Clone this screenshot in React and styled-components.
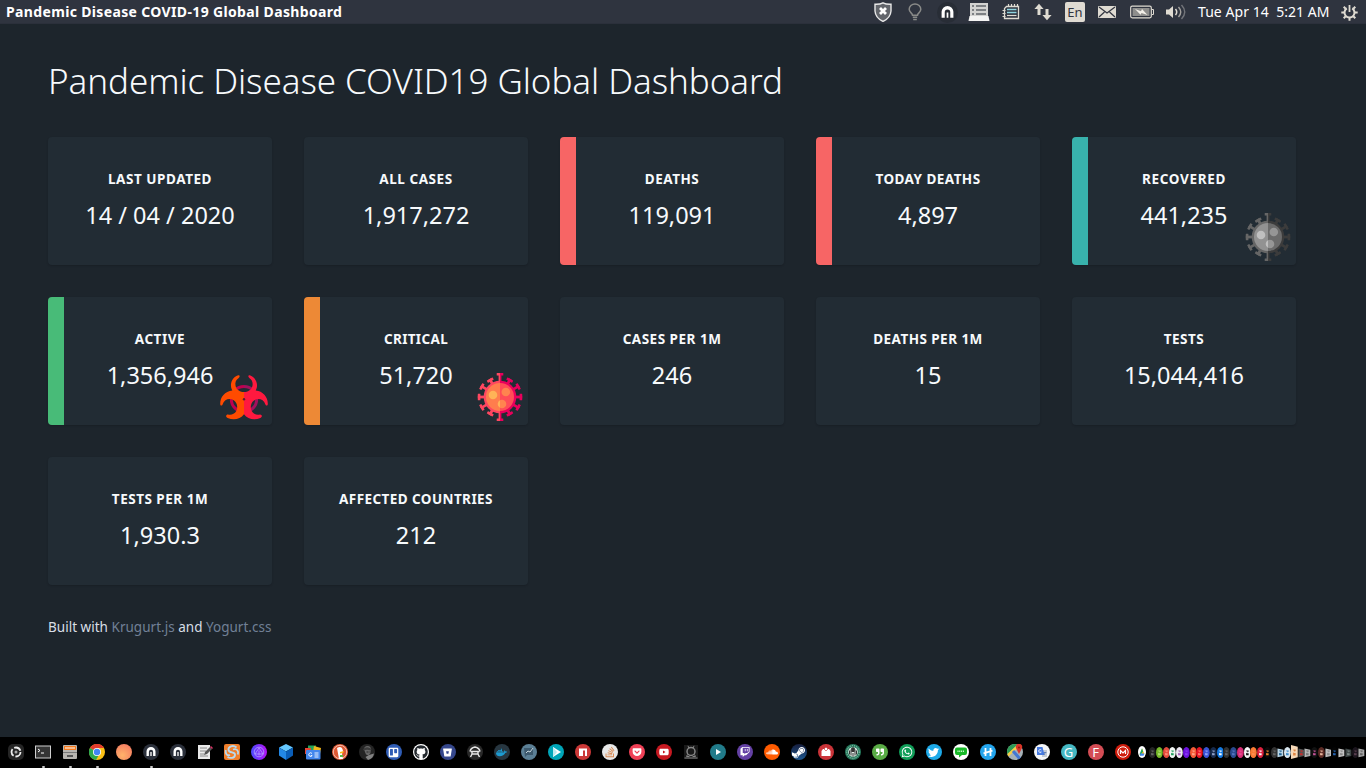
import React from "react";
import styled, { createGlobalStyle } from "styled-components";
import {
  FaTrello, FaGithub, FaBitbucket, FaDocker, FaStackOverflow, FaGetPocket, FaYoutube,
  FaTwitch, FaSoundcloud, FaSteamSymbol, FaQuoteRight, FaWhatsapp, FaTwitter, FaHips,
} from "react-icons/fa";

const GlobalStyle = createGlobalStyle`
  * { box-sizing: border-box; }
  body {
    margin: 0;
    background: #1d252c;
    color: #f7fafc;
    font-family: "Noto Sans", "Open Sans", sans-serif;
    overflow: hidden;
  }
`;

const Desktop = styled.div`
  width: 1366px;
  height: 768px;
  display: flex;
  flex-direction: column;
`;

const MenuBar = styled.header`
  height: 24px;
  flex: none;
  display: flex;
  align-items: center;
  justify-content: space-between;
  padding: 0 8px 0 6px;
  background: linear-gradient(#2f343f 0 23px, #2b303b 23px);
  white-space: nowrap;
`;

const WindowTitle = styled.div`
  font-size: 14px;
  line-height: 24px;
  font-weight: 700;
  letter-spacing: 0.35px;
  color: #fff;
`;

const Tray = styled.div`
  display: flex;
  align-items: center;
  height: 24px;
`;

const TraySlot = styled.div`
  width: ${(p) => p.$w}px;
  height: 24px;
  display: flex;
  align-items: center;
  justify-content: center;
`;

const Keyboard = styled.div`
  width: 20px;
  height: 20px;
  border-radius: 2px;
  background: #dfdbd2;
  color: #30343f;
  font-size: 13px;
  line-height: 21px;
  text-align: center;
`;

const Clock = styled.div`
  width: 132px;
  margin: 0 11px 0 7px;
  font-size: 14px;
  line-height: 24px;
  letter-spacing: 0.05px;
  color: #fff;
  white-space: pre;
`;

const Page = styled.main`
  flex: 1;
  padding: 33px 48px 0;
`;

const Heading = styled.h1`
  margin: 0 0 32px;
  height: 48px;
  font-size: 35px;
  line-height: 48px;
  font-weight: 300;
  letter-spacing: -0.06px;
  white-space: nowrap;
`;

const Grid = styled.section`
  display: grid;
  grid-template-columns: repeat(5, 224px);
  grid-auto-rows: 128px;
  gap: 32px;
`;

const Card = styled.article`
  position: relative;
  display: flex;
  flex-direction: column;
  align-items: center;
  padding-top: 32px;
  border-radius: 4px;
  background: ${(p) =>
    p.$accent ? `linear-gradient(90deg, ${p.$accent} 16px, #222c34 16px)` : "#222c34"};
  box-shadow: 0 1px 2px rgba(0, 0, 0, 0.16);
`;

const Label = styled.div`
  font-size: 13.5px;
  line-height: 20px;
  font-weight: 700;
  letter-spacing: ${(p) => p.$track}px;
  white-space: nowrap;
`;

const Value = styled.div`
  margin-top: 8px;
  font-size: 23.5px;
  line-height: 36px;
  white-space: nowrap;
`;

const Badge = styled.div`
  position: absolute;
  right: 4px;
  bottom: 4px;
  width: 48px;
  height: 48px;
`;

const Credits = styled.p`
  margin: 32px 0 0;
  font-size: 13.5px;
  line-height: 20px;
  letter-spacing: 0.02px;
  color: #d8dee6;
`;

const Link = styled.span`
  color: #718096;
`;

const Dock = styled.footer`
  height: 31px;
  flex: none;
  display: flex;
  align-items: center;
  padding: 0 0 1px 2px;
  background: #000;
  overflow: hidden;
`;

const DockSlot = styled.div`
  position: relative;
  width: 27px;
  flex: none;
  display: flex;
  justify-content: center;
  ${(p) => p.$running && `
    &::after {
      content: "";
      position: absolute;
      left: 12.5px;
      bottom: -8px;
      width: 3px;
      height: 2px;
      border-radius: 1px;
      background: #c8c8c8;
    }
  `}
  ${(p) => p.$active && `
    &::before {
      content: "";
      position: absolute;
      left: 12.5px;
      top: -8px;
      width: 3px;
      height: 1px;
      background: #9a9a9a;
    }
  `}
`;

const Disc = styled.div`
  width: 16px;
  height: 16px;
  border-radius: 50%;
  display: flex;
  align-items: center;
  justify-content: center;
  background: ${(p) => p.$bg};
  color: ${(p) => p.$fg || "#fff"};
  font-size: ${(p) => p.$size || 9}px;
  line-height: 16px;
  overflow: hidden;
`;

const Overflow = styled.div`
  display: flex;
  align-items: center;
  padding-left: 2px;
`;

const Sliver = styled.svg`
  display: block;
  flex: none;
  width: ${(p) => (p.$wide ? 8 : 6.75)}px;
  height: ${(p) => p.$h || 11}px;
  margin-right: ${(p) => (p.$wide ? 3 : 0)}px;
`;

const virusWarm = { shellL: "#ff4760", shellR: "#e8005c", coreL: "#ff7d4d", coreR: "#ff4d57", spotL: "#ffb357", spotR: "#ff844f" };
const virusGrey = { shellL: "#666", shellR: "#3c3c3c", coreL: "#929292", coreR: "#6b6b6b", spotL: "#c0c0c0", spotR: "#969696" };
const reach = [24, 20.8, 22.2, 22.2, 22.2, 20.8, 24, 20.8, 22.2, 22.2, 22.2, 20.8];

function Virus({ id, palette: c }) {
  const body = (shell, core) => (
    <>
      {reach.map((r, i) => (
        <g key={i} transform={`rotate(${i * 30} 24 24)`} fill={shell}>
          <rect x="22.6" y={24 - r} width="2.8" height="11" />
          <rect x="20.7" y={24 - r} width="6.6" height="2.6" rx=".3" />
        </g>
      ))}
      <circle cx="24" cy="24" r="16.3" fill={shell} />
      <circle cx="24" cy="24" r="14" fill={core} />
    </>
  );
  return (
    <svg width="48" height="48" viewBox="0 0 48 48">
      <clipPath id={`${id}-l`}><rect width="24" height="48" /></clipPath>
      <clipPath id={`${id}-r`}><rect x="24" width="24" height="48" /></clipPath>
      <g clipPath={`url(#${id}-l)`}>{body(c.shellL, c.coreL)}</g>
      <g clipPath={`url(#${id}-r)`}>{body(c.shellR, c.coreR)}</g>
      <circle cx="17" cy="22" r="4.3" fill={c.spotL} />
      <circle cx="29.8" cy="19" r="4.3" fill={c.spotR} />
      <circle cx="26" cy="31" r="4.3" fill={c.spotR} />
      <path d="M24 27.2a4.3 4.3 0 0 0 0 7.6Z" fill={c.spotL} />
    </svg>
  );
}

const horn =
  "M18.2 2.3C13 4 10.6 9 11 13.2C11.1 15 11.7 16.2 12.3 17.6C5 18.2 0 24.2.2 31C.3 33 2.2 33 2.7 31.3C4.2 26 10.2 24.8 14 27.4C17.4 29.8 18 34.5 16.3 38C14.4 41.4 11 42.2 8 41.5C5.6 41.5 5.6 44.2 7.6 45C13.2 47.5 20.3 46.6 24 41.3V19C20.3 19 16.6 17 15.6 13C14.8 9.3 16 7 18.7 5C20.3 3.4 19.8 1.9 18.2 2.3Z";

function Biohazard() {
  return (
    <svg width="48" height="48" viewBox="0 0 48 48">
      <path d="M24 13.5a12.7 12.7 0 0 0 0 25.4" fill="none" stroke="#c1004f" strokeWidth="3" />
      <path d="M24 13.5a12.7 12.7 0 0 1 0 25.4" fill="none" stroke="#a3105d" strokeWidth="3" />
      <path d={horn} fill="#ff4b00" />
      <path d={horn} fill="#ff193f" transform="matrix(-1 0 0 1 48 0)" />
      <circle cx="24" cy="26.3" r="1.2" fill="#5c1d2c" />
    </svg>
  );
}

const Arch = ({ size = 16, bg = "#2b303b" }) => (
  <svg width={size} height={size} viewBox="0 0 16 16">
    <circle cx="8" cy="8" r="8" fill={bg} />
    <path d="M3.5 12V7.5a4.5 4.5 0 0 1 9 0V12h-2.4V7.8a2.1 2.1 0 0 0-4.2 0V12Z" fill="#fff" />
    <path d="M8 8v4" stroke="#fff" strokeWidth="1.3" />
  </svg>
);

const TrayIcons = () => (
  <>
    <TraySlot $w={32}>
      <svg width="18" height="20" viewBox="0 0 18 20">
        <path d="M1 2.2Q6 2.4 9 .8Q12 2.4 17 2.2V9Q16.5 16 9 19.4Q1.500 16 1 9Z" fill="#62656b" stroke="#e8e8e8" strokeWidth="1.4" />
        <path d="m6 6 6 6m0-6-6 6" stroke="#fff" strokeWidth="2.8" />
      </svg>
    </TraySlot>
    <TraySlot $w={32}>
      <svg width="14" height="18" viewBox="0 0 14 18" fill="none" stroke="#898a88" strokeWidth="1.5">
        <path d="M4.500 12.200C4.500 10 1.200 9.500 1.200 6.300a5.800 5.300 0 0 1 11.600 0C12.800 9.500 9.500 10 9.500 12.200Z" />
        <path d="M4.800 14.200h4.400M5.200 16.500h3.600" />
      </svg>
    </TraySlot>
    <TraySlot $w={32}><Arch size={21} bg="#282d36" /></TraySlot>
    <TraySlot $w={32}>
      <svg width="22" height="20" viewBox="0 0 22 20">
        <path d="M2 1h18v14H2Z" fill="#d4d4d2" />
        <path d="M1.500 14h19l1 5H.5Z" fill="#f4f4f3" />
        <path d="M4 4h2m2 0h10M4 8h2m2 0h10M4 12h2m2 0h10" stroke="#62666b" strokeWidth="1.5" />
      </svg>
    </TraySlot>
    <TraySlot $w={32}>
      <svg width="18" height="18" viewBox="0 0 18 18" fill="none" stroke="#dfdbd2">
        <path d="M4.500 3.500h12v12H2.500V5.500Z" strokeWidth="1.300" />
        <path d="M6.500 1v3m3-3v3m3-3v3m3-3v3M.5 7.500h3m-3 3h3m-3 3h3" strokeWidth="1.200" />
        <path d="M5 6.500h9.500m-9.500 3h9.500" stroke="#8fd4df" strokeWidth="1.300" />
        <path d="M5 12.500h9.500" strokeWidth="1.200" />
      </svg>
    </TraySlot>
    <TraySlot $w={32}>
      <svg width="18" height="18" viewBox="0 0 18 18" fill="#dfdbd2">
        <path d="M5 .8 9.600 6H6.500v6h-3V6H.4ZM13 17.200 8.400 12h3.100V6h3v6h3.100Z" />
      </svg>
    </TraySlot>
    <TraySlot $w={32}><Keyboard>En</Keyboard></TraySlot>
    <TraySlot $w={32}>
      <svg width="18" height="12" viewBox="0 0 18 12">
        <rect width="18" height="12" rx="1" fill="#dfdbd2" />
        <path d="m1 1 8 6 8-6M1 11l5.500-5M17 11l-5.500-5" fill="none" stroke="#30343f" strokeWidth="1.200" />
      </svg>
    </TraySlot>
    <TraySlot $w={38}>
      <svg width="24" height="14" viewBox="0 0 24 14">
        <rect x=".7" y="1.200" width="20.600" height="11.600" rx="1.500" fill="none" stroke="#dfdbd2" strokeWidth="1.200" />
        <rect x="2.500" y="3" width="17" height="8" fill="#8e8e8c" />
        <path d="M22 4.500h1.500v5H22" stroke="#dfdbd2" fill="none" />
        <path d="m5 4 6 2.200L12 4l5.500 6-6-2L10.500 9.800Z" fill="#f2efe8" />
      </svg>
    </TraySlot>
    <TraySlot $w={30}>
      <svg width="20" height="16" viewBox="0 0 20 16" fill="none">
        <path d="M0 5.500h3L7 2v12L3 10.500H0Z" fill="#dfdbd2" />
        <path d="M9.500 5q2.500 3 0 6" stroke="#dfdbd2" strokeWidth="1.500" />
        <path d="M12.500 3q4.500 5 0 10" stroke="#a5a39f" strokeWidth="1.400" />
        <path d="M15.500 1q6.500 7 0 14" stroke="#73757a" strokeWidth="1.400" />
      </svg>
    </TraySlot>
  </>
);

const Power = () => (
  <svg width="17" height="17" viewBox="0 0 17 17" fill="none" stroke="#dfdbd2">
    <path d="M5.800 4.300a5 5 0 1 0 5.400 0" strokeWidth="2" />
    <path d="M8.500 1v7" strokeWidth="1.800" />
    <path d="M.3 8.500h3m10.400 0h3M8.500 13.700v3M2.700 2.700l2 2m9.600-2-2 2M2.700 14.300l2-2m9.600 2-2-2" strokeWidth="2" />
  </svg>
);

const Glyph = ({ children }) => <svg width="16" height="16" viewBox="0 0 16 16">{children}</svg>;

const dock = [
  { el: <Glyph><rect width="16" height="16" rx="5" fill="#252525" /><circle cx="8" cy="8" r="4.500" fill="none" stroke="#eee" strokeWidth="1.800" strokeDasharray="7.500 1.900" /><circle cx="8" cy="8" r="1.500" fill="#aaa" /></Glyph> },
  { run: 1, el: <Glyph><rect x=".5" y="2" width="15" height="12" fill="#353535" stroke="#cfcfcf" /><path d="m3 5 2 1.500L3 8m3 1h3" stroke="#fff" fill="none" /></Glyph> },
  { run: 1, el: <Glyph><rect x="1" y="1" width="14" height="14" rx="1" fill="#b8b5b0" /><path d="M2 2h12v4H2Z" fill="#f57b1f" /><path d="M3 4h10" stroke="#fff" /><path d="M1 8.500h14" stroke="#777" /><path d="M5 11h6v2H5Z" fill="#555" /></Glyph> },
  { run: 1, el: <Glyph><circle cx="8" cy="8" r="8" fill="#fbc116" /><path d="M8 8 1 4A8 8 0 0 1 15 4H8Z" fill="#e33b2e" /><path d="M8 8 1 4a8 8 0 0 0 6 12l4-7Z" fill="#2da94f" /><circle cx="8" cy="8" r="4" fill="#fff" /><circle cx="8" cy="8" r="3.200" fill="#4285f4" /></Glyph> },
  { el: <Disc $bg="radial-gradient(circle at 40% 70%, #ffb36a, #f2705f)" /> },
  { run: 1, active: 1, el: <Arch /> },
  { el: <Arch /> },
  { el: <Glyph><path d="M1 1h12v14H1Z" fill="#e9e9e9" /><path d="M3 4h7M3 7h6M3 10h4M3 12h8" stroke="#888" /><path d="m7 11 1-3 5-5 2 2-5 5Z" fill="#555" /><path d="m13 3 2 2 1-1-2-2Z" fill="#d36" /></Glyph> },
  { el: <Glyph><rect width="16" height="16" rx="2" fill="#ef7e2b" /><path d="M12.500 3.500C9 .5 4 2.500 4.500 6s7 1.500 6.500 5-5 3.500-7.500 2M1.800 6c-.8 4 1.500 6 4.200 5M9 5.500c4-1.500 6 2 4.800 5" fill="none" stroke="#b8d9ee" strokeWidth="1.800" /></Glyph> },
  { el: <Glyph><defs><linearGradient id="violet"><stop stopColor="#4b4cff" /><stop offset="1" stopColor="#b510f5" /></linearGradient></defs><circle cx="8" cy="8" r="8" fill="url(#violet)" /><g fill="none" stroke="#b6b1ff" strokeWidth=".7"><circle cx="8" cy="8" r="4.800" /><path d="m8 4 4 6H4Zm0 2.500v5" /></g></Glyph> },
  { el: <Glyph><path d="m8 0 7 3.500-7 4-7-4Z" fill="#66c8ff" /><path d="m1 3.500 7 4V16l-7-4.500Z" fill="#2388e6" /><path d="m15 3.500-7 4V16l7-4.500Z" fill="#0a5eb8" /></Glyph> },
  { el: <Glyph><path d="M3 1.500h8V8H3Z" fill="#24a45b" /><path d="m9 2 7 2-1 6-7-2Z" fill="#f2b61b" /><path d="M0 4h6v6H0Z" fill="#e94435" /><rect x="1" y="6" width="14.500" height="9.500" rx="1" fill="#4386ed" /><path d="M7 9.500a1.800 1.800 0 1 0 .2 2H5.800M9.500 9h4M9.500 11h4M9.500 13h4" fill="none" stroke="#fff" strokeWidth=".9" /></Glyph> },
  { el: <Glyph><circle cx="8" cy="8" r="8" fill="#de5833" /><circle cx="8" cy="8" r="6.700" fill="none" stroke="#fff" strokeWidth=".6" /><path d="M5 4q5-3 6 3l-1 3 1 5H7Z" fill="#fff" /><path d="m8 8 4-1-1 2-3 .5Z" fill="#fdb913" /><path d="M8 11h3v2H8Z" fill="#57b947" /></Glyph> },
  { el: <Glyph><circle cx="8" cy="8" r="8" fill="#242424" /><path d="M5 5.500Q5 2 8.500 2T12 6l-.5 3-2 2.500L7 10.500Z" fill="#686868" /><path d="M4 5q4-3.500 8.500 0l-.5 1.500Q8 5 4.500 6.500Z" fill="#3b3b3b" /><path d="M7.500 8h2M10.500 8h1" stroke="#2a2a2a" /><path d="m10 11 5-1.500A8 8 0 0 1 9 16L6.500 13Z" fill="#828282" /></Glyph> },
  { el: <Disc $bg="#2f5cb5" $size={11}><FaTrello /></Disc> },
  { el: <Disc $bg="#fff" $fg="#24292e" $size={14}><FaGithub /></Disc> },
  { el: <Disc $bg="#35478c"><FaBitbucket /></Disc> },
  { el: <Glyph><circle cx="8" cy="8" r="8" fill="#292929" /><path d="M3 7.500Q3.500 4 8 3q4.500 1 5 4.500M3.500 7.500h9M5 7v3l-1.500 3M11 7v3l1.500 3M5.500 10h5" fill="none" stroke="#e7e7e7" strokeWidth="1.400" /></Glyph> },
  { el: <Disc $bg="#273640" $fg="#1d9bd1" $size={11}><FaDocker /></Disc> },
  { el: <Glyph><circle cx="8" cy="8" r="8" fill="#5b7f95" /><path d="M3 4h9v7H6l-2 2Z" fill="#3d596d" /><path d="m5 9 2-2 2 1 3-4" fill="none" stroke="#d6e3e9" strokeWidth=".9" /></Glyph> },
  { el: <Glyph><circle cx="8" cy="8" r="8" fill="#00a5b8" /><path d="m5 3 8 5-8 5Z" fill="#fff" /><path d="m5 3 4 5-4 5Z" fill="#bdeaf0" /></Glyph> },
  { el: <Glyph><circle cx="8" cy="8" r="8" fill="#cb3837" /><path d="M4 4.500h8V12h-2V6.500H8V12H4Z" fill="#fff" /></Glyph> },
  { el: <Disc $bg="#e8e8e8" $fg="#d98850" $size={12}><FaStackOverflow /></Disc> },
  { el: <Disc $bg="#ef4056" $size={10}><FaGetPocket /></Disc> },
  { el: <Disc $bg="#c71921" $size={10}><FaYoutube /></Disc> },
  { el: <Glyph><rect x="1" y="1" width="14" height="14" fill="#191919" /><circle cx="8" cy="7.500" r="4" fill="none" stroke="#858585" strokeWidth="1.500" /><path d="M5.800 4 5 1.800m5.200 2.200 .8-2.200M1.500 14h13M4.500 10.500 3.500 12.500h3m5-2 1 2h-3" stroke="#858585" fill="none" /></Glyph> },
  { el: <Glyph><circle cx="8" cy="8" r="8" fill="#217b8a" /><path d="m6 5 5 3-5 3Z" fill="#fff" /></Glyph> },
  { el: <Disc $bg="#6441a4" $size={10}><FaTwitch /></Disc> },
  { el: <Disc $bg="#ff5b00" $size={12}><FaSoundcloud /></Disc> },
  { el: <Disc $bg="linear-gradient(#161d3c, #1c568f)" $size={15}><FaSteamSymbol /></Disc> },
  { el: <Glyph><circle cx="8" cy="8" r="8" fill="#ca3338" /><path d="M3.500 7 5 5h6l1.500 2v5h-9Z" fill="#fff" /><path d="M6 5 8 3l2 2-2 2Z" fill="#fff" stroke="#ca3338" strokeWidth=".6" /></Glyph> },
  { el: <Glyph><circle cx="8" cy="8" r="8" fill="#26795c" /><circle cx="8" cy="8" r="6.300" fill="none" stroke="#a9d1c2" strokeDasharray="1 1" /><circle cx="8" cy="8" r="4.800" fill="#e2ece7" /><path d="M4.500 6.500v4m1.500-5v6m4-6v6m1.500-5v4M8 9v3.500" stroke="#222" strokeWidth=".9" /><path d="M6 4.500 8 3l2 1.500-.5 3.500h-3Z" fill="#333" /></Glyph> },
  { el: <Disc $bg="#5aac45" $size={8}><FaQuoteRight /></Disc> },
  { el: <Disc $bg="#109d58" $size={12}><FaWhatsapp /></Disc> },
  { el: <Disc $bg="#1da9e8" $size={11}><FaTwitter /></Disc> },
  { el: <Glyph><circle cx="8" cy="8" r="8" fill="#fff" /><path d="M4 3.500h8q2 0 2 2V9q0 2-2 2H9l-3 2.500V11H4q-2 0-2-2V5.500q0-2 2-2Z" fill="#18b928" /><path d="M4.500 7.300h7" stroke="#d8ffda" strokeWidth="1.500" strokeDasharray="1 .8" /></Glyph> },
  { el: <Disc $bg="#24a5ed" $size={10}><FaHips style={{ display: "none" }} /><Glyph><path d="M5.500 4v8m5-8v8M3.500 9.300l9-2.600" stroke="#fff" strokeWidth="1.800" /></Glyph></Disc> },
  { el: <Glyph><clipPath id="map"><circle cx="8" cy="8" r="8" /></clipPath><g clipPath="url(#map)"><path d="M0 0h16v16H0Z" fill="#a6b1b7" /><path d="M0 0h11L0 11Z" fill="#2d9b55" /><path d="m0 12 10-9" stroke="#f7cf45" strokeWidth="2.500" /><path d="m6 7 8 9" stroke="#4277d4" strokeWidth="3" /></g><path d="M12 10 9 4a3.200 3.200 0 1 1 6 0Z" fill="#da3527" /><circle cx="12" cy="3.500" r="1" fill="#8c170e" /></Glyph> },
  { el: <Glyph><circle cx="8" cy="8" r="8" fill="#f4f5f7" /><path d="M8 6h5v7H8Z" fill="#c4cbd6" /><path d="M3 3h5.500l2 8H3Z" fill="#4579df" /><path d="M7.300 6a1.500 1.500 0 1 0 0 2H6.300" stroke="#fff" fill="none" strokeWidth=".8" /><path d="M9.800 8.500h2.600M11 8v1q-.5 1.500-1.200 2" stroke="#4c6da8" fill="none" strokeWidth=".7" /></Glyph> },
  { el: <Disc $bg="#45b8c3" $size={13}>G</Disc> },
  { el: <Disc $bg="#d44d55" $size={13}>F</Disc> },
  { el: <Glyph><circle cx="8" cy="8" r="8" fill="#cf1b0b" /><circle cx="8" cy="8" r="5.200" fill="none" stroke="#fff" /><path d="M5.500 10V6.500L8 9l2.500-2.500V10" fill="none" stroke="#fff" strokeWidth="1.200" /></Glyph> },
];

const slivers = [
  ["#242424", "#666"], ["#76b82a", "#b0e070"], ["#e44a3c", "#ff8a75"], ["#f1f5f3", "#1a9b59"],
  ["#eee9f4", "#a65aba"], ["#6d12df", "#8a3bf5"], ["#f45b37", "#ffa98c"], ["#e81323", "#ff7b73"],
  ["#3853d6", "#8fa4fa"], ["#17294a", "#93a4cc"], ["#1277df", "#fff"], ["#303030", "#666"],
  ["#29498e", "#5877c0"], ["#d62c75", "#e8508f"], ["#f6f6f6", "#111"], ["#fa7b34", "#ff9152"],
  ["#db203d", "#fff"], ["#0a0a0a", "#ed872a"], ["#333", "#666"], ["#b9d5e6", "#1e5f90", 1],
  ["#d9e6ef", "#3787c8"], ["#f6d9b8", "#dd8542", 2], ["#555", "#c42d2d", 1], ["#b7b7b7", "#777", 1],
  ["#111", "#c9549b"], ["#5b2a24", "#eab79e"], ["#bfbfbf", "#888", 1], ["#040404", "#2769ba"],
  ["#c4c4c4", "#888", 1], ["#3d4545", "#7d8886", 1], ["#1b151d", "#5b4050"], ["#a6a6a6", "#666", 1],
];

const cards = [
  { label: "LAST UPDATED", value: "14 / 04 / 2020", track: 0.55 },
  { label: "ALL CASES", value: "1,917,272", track: 0.55 },
  { label: "DEATHS", value: "119,091", track: 0.5, accent: "#f76565" },
  { label: "TODAY DEATHS", value: "4,897", track: 0.45, accent: "#f76565" },
  { label: "RECOVERED", value: "441,235", track: 0.65, accent: "#38b2ac", badge: <Virus id="recovered" palette={virusGrey} /> },
  { label: "ACTIVE", value: "1,356,946", track: 0.55, accent: "#48bb78", badge: <Biohazard /> },
  { label: "CRITICAL", value: "51,720", track: 0.35, accent: "#ed8936", badge: <Virus id="critical" palette={virusWarm} /> },
  { label: "CASES PER 1M", value: "246", track: 0.5 },
  { label: "DEATHS PER 1M", value: "15", track: 0.45 },
  { label: "TESTS", value: "15,044,416", track: 0.5 },
  { label: "TESTS PER 1M", value: "1,930.3", track: 0.5 },
  { label: "AFFECTED COUNTRIES", value: "212", track: 0.42 },
];

export default function App() {
  return (
    <Desktop>
      <GlobalStyle />
      <MenuBar>
        <WindowTitle>Pandemic Disease COVID-19 Global Dashboard</WindowTitle>
        <Tray>
          <TrayIcons />
          <Clock>Tue Apr 14  5:21 AM</Clock>
          <Power />
        </Tray>
      </MenuBar>
      <Page>
        <Heading>Pandemic Disease COVID19 Global Dashboard</Heading>
        <Grid>
          {cards.map((card) => (
            <Card key={card.label} $accent={card.accent}>
              <Label $track={card.track}>{card.label}</Label>
              <Value>{card.value}</Value>
              {card.badge && <Badge>{card.badge}</Badge>}
            </Card>
          ))}
        </Grid>
        <Credits>
          Built with <Link>Krugurt.js</Link> and <Link>Yogurt.css</Link>
        </Credits>
      </Page>
      <Dock>
        {dock.map((item, i) => (
          <DockSlot key={i} $running={item.run} $active={item.active}>{item.el}</DockSlot>
        ))}
        <Overflow>
          <Sliver $wide $h={12} viewBox="0 0 16 16" preserveAspectRatio="none">
            <circle cx="8" cy="8" r="8" fill="#fff" />
            <path d="m8 3 5 8H8Z" fill="#f5bd18" /><path d="m8 3-5 8 2 2 5-6Z" fill="#20a35b" /><path d="M5 10h8l-2 3H4Z" fill="#4285f4" />
          </Sliver>
          {slivers.map(([bg, fg, shape], i) => (
            <Sliver key={i} $h={shape === 2 ? 14 : 11} viewBox="0 0 16 16" preserveAspectRatio="none">
              {shape ? <path d={shape === 2 ? "M0 0 16 2v12L0 16Z" : "M1 2 15 4v9L1 15Z"} fill={bg} /> : <circle cx="8" cy="8" r="8" fill={bg} />}
              <path d="M5 5h6v2H7v2h4v3H5V9l3-1Z" fill={fg} />
            </Sliver>
          ))}
        </Overflow>
      </Dock>
    </Desktop>
  );
}
